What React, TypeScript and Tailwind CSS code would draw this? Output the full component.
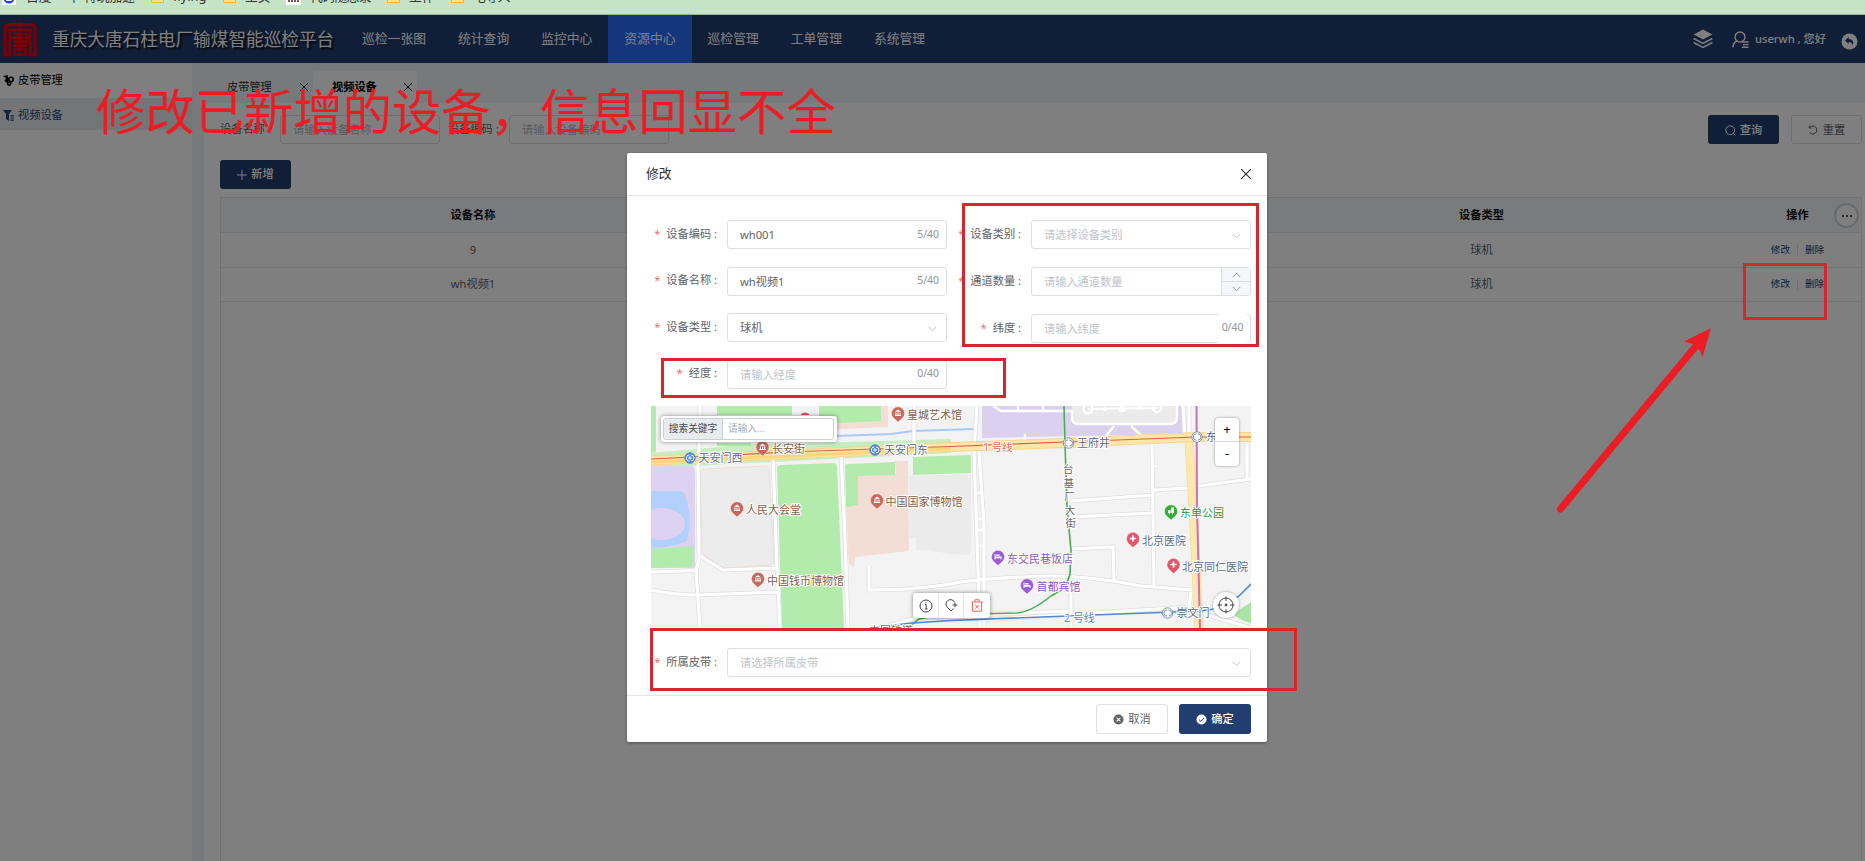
import React from "react";

const NAV = ["巡检一张图", "统计查询", "监控中心", "资源中心", "巡检管理", "工单管理", "系统管理"];

function Folder() {
  return (
    <svg width="13" height="12" viewBox="0 0 13 12">
      <path d="M0.5 1.5 H5 L6.5 3 H12.5 V11.5 H0.5 Z" fill="#fbe08a" stroke="#e8bb3c" />
    </svg>
  );
}

function Bookmarks() {
  return (
    <div className="relative h-[15px] w-full overflow-hidden border-b border-[#8fb596] bg-[#c5e3c7]">
      <div className="absolute left-0 top-[-13px] flex h-[20px] items-center whitespace-nowrap text-[12.8px] text-[#333]">
        <div className="flex w-[151px] items-center gap-[10px] pl-[2px]">
          <svg width="14" height="16" viewBox="0 0 14 16">
            <rect width="14" height="16" fill="#fff" />
            <circle cx="7" cy="9" r="5.5" fill="#2a3fd6" />
            <rect x="4" y="10" width="6" height="2" rx="1" fill="#fff" />
          </svg>
          <span>百度 一下 特玩加速</span>
        </div>
        <div className="flex w-[72px] items-center gap-[9px]"><Folder /><span>flying</span></div>
        <div className="flex w-[63px] items-center gap-[9px]"><Folder /><span>主页</span></div>
        <div className="flex w-[101px] items-center gap-[9px]">
          <svg width="15" height="16" viewBox="0 0 15 16">
            <rect width="15" height="16" fill="#fff" />
            <path d="M3 13V10M6 13V8M9 13V9M12 13V10" stroke="#533" strokeWidth="1.6" />
          </svg>
          <span className="tracking-[-0.6px]">代码随想录</span>
        </div>
        <div className="flex w-[64px] items-center gap-[9px]"><Folder /><span>工作</span></div>
        <div className="flex items-center gap-[9px]"><Folder /><span className="tracking-[-0.6px]">电导入</span></div>
      </div>
    </div>
  );
}

function Header() {
  return (
    <header className="flex h-[48px] items-center bg-[#223d6f] text-white">
      <svg className="ml-[3px]" width="34" height="35" viewBox="0 0 34 35" fill="none" stroke="#f5000a" strokeWidth="3.4">
        <path d="M2 34V7Q2 2.6 6 2.6H28Q32 2.6 32 7V34" />
        <path d="M1 33H6.8V8H27.2V33H33" strokeWidth="2.8" />
        <path d="M17 0V24M10 12H24V19.6H10M6 15.8H28M10 23.6H24" strokeWidth="2.6" />
        <path d="M11.6 27.6H22.4V32.4H11.6Z" strokeWidth="2.8" />
      </svg>
      <h1 className="ml-[15px] w-[294px] whitespace-nowrap text-[17.65px] font-normal [text-shadow:2px_2px_2px_rgba(0,0,0,0.9)]">
        重庆大唐石柱电厂输煤智能巡检平台
      </h1>
      <nav className="flex h-full">
        {NAV.map((item) => (
          <div
            key={item}
            className={
              item === "资源中心"
                ? "flex h-full items-center bg-[#2a6df4] px-4 text-[12.8px]"
                : "flex h-full items-center px-4 text-[12.8px]"
            }
          >
            {item}
          </div>
        ))}
      </nav>
      <div className="ml-auto flex items-center pr-[7px]">
        <svg width="20" height="20" viewBox="0 0 20 20" fill="none" stroke="#fff" strokeWidth="1.5">
          <path d="M10 0.6 19.4 5.6 10 10.6 0.6 5.6Z" fill="#fff" stroke="none" />
          <path d="M0.6 9.5 10 14.4 19.4 9.5M0.6 13.5 10 18.4 19.4 13.5" />
        </svg>
        <svg className="ml-[19px]" width="17" height="17" viewBox="0 0 17 17" fill="none" stroke="#fff" strokeWidth="1.4">
          <circle cx="8" cy="6" r="5" />
          <path d="M5 10Q1.5 11.5 0.8 16.3M10 11h6.5M11 13.6h5.5M10 16.2h6.5" />
        </svg>
        <span className="ml-[6px] w-[81px] whitespace-nowrap text-[11.2px] font-medium">userwh , 您好</span>
        <svg className="ml-[5px] mt-[4px]" width="17" height="17" viewBox="0 0 17 17">
          <circle cx="8.5" cy="8.5" r="8" fill="#fff" />
          <path d="M7.7 4 4 7.5 7.7 11V9Q11 8.8 11.8 12.5 13.8 6.6 7.7 6.1Z" fill="#223d6f" />
        </svg>
      </div>
    </header>
  );
}

function Close({ className }: { className?: string }) {
  return (
    <svg className={className} width="10" height="10" viewBox="0 0 10 10" stroke="currentColor" strokeWidth="1">
      <path d="M1 1 9 9M9 1 1 9" />
    </svg>
  );
}

function Chevron({ up, className }: { up?: boolean; className?: string }) {
  return (
    <svg className={className} width="9" height="6" viewBox="0 0 9 6" fill="none" stroke="currentColor" strokeWidth="1">
      <path d={up ? "M0.8 5 4.5 1.2 8.2 5" : "M0.8 1 4.5 4.8 8.2 1"} />
    </svg>
  );
}

function Actions() {
  return (
    <div className="flex items-center justify-center text-[9.6px] text-[#223d6f]">
      <span>修改</span>
      <span className="mx-[7px] h-[11px] w-px bg-[#dcdfe6]" />
      <span>删除</span>
    </div>
  );
}

const COLS = "grid grid-cols-[504px_504px_505px_minmax(0,1fr)] items-center text-center";

function Page() {
  return (
    <div className="flex h-[798px]">
      <aside className="w-[192px] shrink-0 bg-white text-[11.2px]">
        <div className="flex h-[35px] items-center gap-[4px] pl-[3px] text-black">
          <svg width="11" height="11" viewBox="0 0 11 11" fill="none" stroke="currentColor">
            <path d="M0 1 3 3 1.5 6 4 8 6 5 4.5 0Z" fill="currentColor" stroke="none" />
            <circle cx="8" cy="4.4" r="2.2" strokeWidth="1.6" />
            <circle cx="6.2" cy="8.6" r="1.6" strokeWidth="1.6" />
          </svg>
          <span>皮带管理</span>
        </div>
        <div className="flex h-[32px] items-center gap-[4px] bg-[#e8eaef] pl-[3px] pt-[2px] text-[#29467c]">
          <svg width="11" height="11" viewBox="0 0 11 11" fill="currentColor">
            <path d="M0 0H9L6 4V11L3 9V4Z" />
            <path d="M7.5 5.2H11V6.4H7.5ZM7.5 7.4H11V8.6H7.5ZM7.5 9.6H11V10.8H7.5Z" />
          </svg>
          <span>视频设备</span>
        </div>
      </aside>
      <main className="flex min-w-0 grow flex-col bg-[#f1f3f6]">
        <div className="flex h-[40px] items-end pl-[21px] text-[11.2px]">
          <div className="flex h-[32px] w-[100px] items-center pl-[14px] text-[#333]">
            <span className="w-[72px]">皮带管理</span>
            <Close />
          </div>
          <div className="flex h-[32px] w-[104px] items-center rounded-t-[4px] bg-white pl-[19px] text-black">
            <span className="w-[71px] font-bold">视频设备</span>
            <Close />
          </div>
        </div>
        <section className="ml-[12px] flex grow flex-col bg-white pl-[16px] pr-[3px] pt-[12px] text-[11.2px] text-[#606266]">
          <div className="flex h-[29px] items-center">
            <span className="w-[60px]">设备名称 :</span>
            <div className="flex h-[29px] w-[160px] items-center rounded-[3px] border border-[#dcdfe6] pl-[12px] pt-[1px] text-[#b4b8c0]">请输入设备名称</div>
            <span className="ml-[8px] w-[61px]">设备编码 :</span>
            <div className="flex h-[29px] w-[160px] items-center rounded-[3px] border border-[#dcdfe6] pl-[12px] pt-[1px] text-[#b4b8c0]">请输入设备编码</div>
            <div className="ml-auto flex gap-[12px]">
              <div className="flex h-[29px] w-[71px] items-center justify-center gap-[4px] rounded-[3px] bg-[#223d6f] pt-px font-medium text-white">
                <svg width="11" height="11" viewBox="0 0 11 11" fill="none" stroke="currentColor">
                  <circle cx="5.2" cy="5.2" r="4.4" />
                  <path d="M8.3 8.3 10.3 10.3" />
                </svg>
                查询
              </div>
              <div className="flex h-[29px] w-[71px] items-center justify-center gap-[5px] rounded-[3px] border border-[#dcdfe6] pt-px">
                <svg width="10" height="10" viewBox="0 0 10 10" fill="none" stroke="currentColor">
                  <path d="M2 2.2A4 4 0 1 1 1.6 7.4M1.2 0.6V3H3.6" />
                </svg>
                重置
              </div>
            </div>
          </div>
          <div className="mt-[16px] flex h-[29px] w-[71px] items-center justify-center gap-[4px] rounded-[3px] bg-[#223d6f] font-medium text-white">
            <svg width="10" height="10" viewBox="0 0 10 10" stroke="currentColor"><path d="M5 0V10M0 5H10" /></svg>
            新增
          </div>
          <div className="mt-[8px] grow border-x border-t border-[#e3e6ec]">
            <div className={`${COLS} relative h-[35px] border-b border-[#e3e6ec] bg-[#f4f6fa] font-bold text-[#111]`}>
              <span>设备名称</span>
              <span />
              <span>设备类型</span>
              <span>操作</span>
              <span className="absolute right-[2px] top-[5px] flex h-[25px] w-[25px] items-center justify-center gap-[2px] rounded-full border-2 border-[#d0d3d8] bg-white">
                <i className="h-[2px] w-[2px] bg-[#555]" />
                <i className="h-[2px] w-[2px] bg-[#555]" />
                <i className="h-[2px] w-[2px] bg-[#555]" />
              </span>
            </div>
            <div className={`${COLS} h-[35px] border-b border-[#e3e6ec]`}>
              <span>9</span>
              <span />
              <span>球机</span>
              <Actions />
            </div>
            <div className={`${COLS} h-[34px] border-b border-[#e3e6ec]`}>
              <span>wh视频1</span>
              <span />
              <span>球机</span>
              <Actions />
            </div>
          </div>
        </section>
      </main>
    </div>
  );
}

function Label({ text, className }: { text: string; className: string }) {
  return (
    <div className={`${className} flex shrink-0 justify-end whitespace-nowrap pb-[1px]`}>
      <span className="mr-[6px] text-[#f56c6c]">*</span>
      <span>{text} :</span>
    </div>
  );
}

type FieldProps = { label: string; value?: string; placeholder?: string; count?: string; kind?: "select" | "number"; right?: boolean; patch?: boolean };

function Field({ label, value, placeholder, count, kind, right, patch }: FieldProps) {
  return (
    <div className="flex h-[29px] items-center">
      <Label text={label} className={right ? "w-[75px] pr-[10px]" : "w-[100px] pr-[10px]"} />
      <div className="relative flex h-[29px] w-[220px] shrink-0 items-center rounded-[3px] border border-[#dcdfe6] pl-[12px]">
        <span className={value ? "pt-[2px] text-[#606266]" : "pt-[2px] text-[#c0c4cc]"}>{value ?? placeholder}</span>
        {count && !patch && <span className="ml-auto pr-[7px] text-[10.4px] text-[#909399]">{count}</span>}
        {count && patch && (
          <span className="absolute right-[3px] top-[-1px] flex h-[29px] w-[29px] items-center justify-center bg-white pb-[1px] text-[10.4px] text-[#909399]">
            {count}
          </span>
        )}
        {kind === "select" && <Chevron className="ml-auto mr-[9px] mt-[2px] text-[#c0c4cc]" />}
        {kind === "number" && (
          <div className="ml-auto flex h-full w-[29px] flex-col border-l border-[#dcdfe6] bg-[#f5f7fa] text-[#909399]">
            <div className="flex h-[14px] items-center justify-center border-b border-[#dcdfe6]"><Chevron up /></div>
            <div className="flex grow items-center justify-center"><Chevron /></div>
          </div>
        )}
      </div>
    </div>
  );
}

type Place = { x: number; y: number; px: number; text: string; tone: string; pin: "museum" | "hotel" | "hospital" | "park" };

const PLACES: Place[] = [
  { x: 256, y: 8.5, px: 247, text: "皇城艺术馆", tone: "#84604a", pin: "museum" },
  { x: 121, y: 42.5, px: 111.5, text: "长安街", tone: "#84604a", pin: "museum" },
  { x: 95, y: 103.5, px: 86, text: "人民大会堂", tone: "#84604a", pin: "museum" },
  { x: 234.5, y: 95.5, px: 226, text: "中国国家博物馆", tone: "#84604a", pin: "museum" },
  { x: 116, y: 174, px: 107, text: "中国钱币博物馆", tone: "#84604a", pin: "museum" },
  { x: 356, y: 152, px: 347, text: "东交民巷饭店", tone: "#8f58bd", pin: "hotel" },
  { x: 385.5, y: 180.5, px: 376, text: "首都宾馆", tone: "#8f58bd", pin: "hotel" },
  { x: 491, y: 134, px: 482, text: "北京医院", tone: "#566a8c", pin: "hospital" },
  { x: 531, y: 160, px: 522.5, text: "北京同仁医院", tone: "#566a8c", pin: "hospital" },
  { x: 529, y: 106.5, px: 520, text: "东单公园", tone: "#2f9438", pin: "park" },
];

const PIN_FILL = { museum: "#c4695c", hotel: "#9a5cd0", hospital: "#e0566a", park: "#35ac3a" };

const PIN_GLYPH = {
  museum: "M-3 -1.2 0 -3.6 3 -1.2ZM-2.6 -0.6H-1.5V2H-2.6ZM-0.5 -0.6H0.5V2H-0.5ZM1.5 -0.6H2.6V2H1.5ZM-3.2 2H3.2V3H-3.2Z",
  hotel: "M-3.5 -2.5H-2.5V0H3.5V3H2.6V1.8H-2.5V3H-3.5ZM-1.8 -2H1.5V-0.6H-1.8Z",
  hospital: "M-0.8 -3.2H0.8V-0.8H3.2V0.8H0.8V3.2H-0.8V0.8H-3.2V-0.8H-0.8Z",
  park: "M-3 -1H-0.5V2H-1.3V3.4H-2.1V2H-3ZM0.2 -3.4H3V2H2V3.4H1.1V2H0.2Z",
};

const METRO = [
  { x: 39, y: 52, tx: 47.5, text: "天安门西", solid: true },
  { x: 224, y: 44, tx: 233, text: "天安门东", solid: true },
  { x: 417.5, y: 37, tx: 426, text: "王府井", solid: false },
  { x: 546, y: 31, tx: 555, text: "东", solid: false },
  { x: 516.5, y: 207, tx: 525.5, text: "崇文门", solid: false },
];

const ROADS = [
  "M49 0V20L47 58 48 148 M49 150 72 164 126 162 M0 166 45 164.5 49 150 M45 164 49 222",
  "M0 184Q25 189 48 189L126 186",
  "M122 52 126 162 129 222",
  "M190 48 194 130 197 222",
  "M263 0V42",
  "M218 160V184L255 183Q285 181 310 176Q350 171 400 170Q440 170 490 180L541 184",
  "M326 0 323 45 329 222 M328 45 333 120V222 M324 87H332M326 113H333M327 124H333M327 140H333",
  "M501 38 503 180 M503 60H506 M420 95 501 89 M421 111 501 107 M503 84 536 82 M420 143 462 141 463 174",
  "M532 0 534 32 M538 0V30 M548 80 600 73 M596 36V74 M540 186 538 201 330 214 M420 170V222",
  "M230 222 268 211 420 205 M0 222H130 M550 207 600 222",
];

function CityMap() {
  return (
    <div className="relative ml-[24px] h-[222px] w-[600px] overflow-hidden bg-[#f3f3f3]">
      <svg className="block" width="600" height="222" viewBox="0 0 600 222">
        <g fill="#b3ebad">
          <path d="M0 0H5V46L0 47ZM66 0H141V9H66ZM66 37H100V40H66Z" />
          <path d="M126 62Q126 59 130 59L182 57Q186 57 186 61L193 222H131Z" />
          <path d="M0 47 90 39 300 33V36L0 54ZM0 57 300 44V47L0 62Z" opacity="0.7" />
          <path d="M262 51 320 49V67L262 69Z" />
        </g>
        <path d="M168 0H237V21L168 24Z" fill="#f4ddd5" />
        <path d="M168 0H230V15L168 18Z" fill="#b3ebad" />
        <path d="M0 60H40Q44 60 44 65V162H0Z" fill="#ddd3f0" />
        <path d="M0 85 30 85Q34 86 35 92Q42 114 36 135Q20 142 0 142Z" fill="#b3cffc" />
        <ellipse cx="11" cy="118" rx="23" ry="16" fill="#ddd3f0" />
        <path d="M0 143 43 140V157Q42 160 38 161L0 162Z" fill="#b3ebad" />
        <path d="M49 66Q50 63 54 63L114 60Q118 60 118 64L123 154Q123 158 119 159L72 162 51 147Z" fill="#ececec" stroke="#f0dcd6" />
        <path d="M207 70 245 68 244 55H257L258 145 204 151 203 161 198 158 195 100 207 99Z" fill="#f4ddd5" />
        <path d="M194 60Q194 58 197 58L244 56V69L207 70V99L195 101Z" fill="#b3ebad" />
        <path d="M258 70 320 68V149L299 148 278 144 265 145V132H258Z" fill="#ebebeb" />
        <path d="M331 0H531V28L331 32Z" fill="#dbd1ee" />
        <path d="M421 0H526V13Q526 17 521 17L428 18Q421 18 421 12Z" fill="#ebebeb" />
        <path d="M582 208 600 196V217Q590 215 582 208Z" fill="#a9e4a4" />
        <g fill="none" stroke="#fff" strokeWidth="2.4">
          <path d="M342 0 350 5H421M367 0V5M392 0V5M421 5V12Q421 18 428 18H520Q526 17 526 12V0M455 30 463 20M480 20 492 31M374 28V34" />
          <path d="M437 3 506 2" strokeWidth="2" />
          <circle cx="437" cy="3" r="4.5" /><circle cx="506" cy="2" r="4" />
          <g fill="#fff"><circle cx="454" cy="3" r="1" /><circle cx="471" cy="3" r="2" /><circle cx="489" cy="2" r="1" /></g>
        </g>
        <path d="M185 30 240 28 262 25 322 23" fill="none" stroke="#abc9fb" strokeWidth="2" />
        <g fill="none">
          {ROADS.map((d) => <path key={d} d={d} stroke="#dedede" strokeWidth="4.6" />)}
          {ROADS.map((d) => <path key={d} d={d} stroke="#fff" strokeWidth="3.2" />)}
          <path d="M538 34 543 120 548 222" stroke="#f3dc9e" strokeWidth="9" />
          <path d="M538 34 543 120 548 222" stroke="#fde9ae" strokeWidth="7.5" />
          <path d="M0 54.5 150 48 300 41 414 37 545 31H600" stroke="#f8d68c" strokeWidth="10" />
          <path d="M0 54.5 150 48 300 41 414 37 545 31H600" stroke="#ffe6a8" strokeWidth="8" />
          <path d="M0 56 150 49.5 300 42.5" stroke="#fbd779" strokeWidth="3" />
          <path d="M0 53 150 45.5 300 40.5 414 36 545 31H600" stroke="#d9614b" strokeWidth="1.2" />
          <path d="M545.5 0 546 100 549 222" stroke="#cf6fb4" strokeWidth="2" />
          <path d="M413 0 414 37 416 100 420 145 419 168Q416 182 400 190Q380 206 366 207L290 209 268 213 256 222" stroke="#48af53" strokeWidth="1.6" />
          <path d="M225 221 262 217 300 214.5 442 209 549 205 571 202 588 190 600 178" stroke="#4e8bd0" strokeWidth="1.6" />
        </g>
        <path d="M150 9V8Q154 5 158 8V9Z" fill="#dd5262" />
        <g fontSize="11" stroke="#fff" strokeWidth="2" strokeLinejoin="round" paintOrder="stroke" dominantBaseline="central">
          {PLACES.map((p) => <text key={p.text} x={p.x} y={p.y} fill={p.tone}>{p.text}</text>)}
          {METRO.map((m) => <text key={m.text} x={m.tx} y={m.y - 0.5} fill="#566a8c">{m.text}</text>)}
          {["台", "基", "厂", "大", "街"].map((c, i) => (
            <text key={c} x={412 + i * 0.6} y={63 + i * 13.5} fontSize="10.5" fill="#666">{c}</text>
          ))}
          <text x="332" y="40.5" fontSize="10.4" fill="#e0625f">1 号线</text>
          <text x="413" y="211" fontSize="10.8" fill="#4e8bd0">2 号线</text>
          <text x="218" y="224" fill="#84604a">中国铁道</text>
        </g>
        {PLACES.map((p) => (
          <g key={p.text} transform={`translate(${p.px} ${p.y - 1.5})`}>
            <path d="M0 9 -4.7 4.8A6.5 6.5 0 1 1 4.7 4.8Z" fill={PIN_FILL[p.pin]} stroke="#fff" strokeWidth="0.4" />
            <path d={PIN_GLYPH[p.pin]} fill="#fff" />
          </g>
        ))}
        {METRO.map((m) => (
          <g key={m.text} transform={`translate(${m.x} ${m.y})`} fill="none">
            <circle r="5.2" fill={m.solid ? "#4c86d8" : "#fff"} stroke={m.solid ? "#4c86d8" : "#7f93ae"} />
            <path d="M-0.5 3.2A3 3 0 0 1 -0.5 -3.2M1 -3A3 3 0 0 1 1 3" stroke={m.solid ? "#fff" : "#7f93ae"} strokeWidth="1" />
            {m.solid && <circle r="1.2" stroke="#fff" />}
          </g>
        ))}
      </svg>
      <div className="absolute left-[10px] top-[10px] flex h-[26px] w-[176px] rounded-[3px] bg-white p-[2px] pr-[3px] text-[9.7px] shadow-[0_0_4px_rgba(0,0,0,0.45)]">
        <div className="flex grow overflow-hidden rounded-[3px] border border-[#c9cfd6]">
          <span className="flex w-[59px] items-center justify-center whitespace-nowrap border-r border-[#c9cfd6] bg-[#e9ecef] text-[#444b52]">搜索关键字</span>
          <span className="flex items-center pl-[5px] text-[#a8adb3]">请输入...</span>
        </div>
      </div>
      <div className="absolute left-[564px] top-[12px] flex h-[48px] w-[24px] flex-col rounded-[4px] bg-white text-[13px] text-black shadow-[0_0_3px_rgba(0,0,0,0.4)]">
        <span className="flex h-[24px] items-center justify-center border-b border-[#ddd]">+</span>
        <span className="flex h-[24px] items-center justify-center">-</span>
      </div>
      <div className="absolute left-[262px] top-[187px] flex h-[25px] w-[77px] items-center rounded-[3px] bg-white text-[#444] shadow-[0_0_4px_rgba(0,0,0,0.45)]">
        <span className="flex h-full w-[26px] items-center justify-center border-r border-[#e5e5e5]">
          <svg width="14" height="14" viewBox="0 0 14 14" fill="none" stroke="currentColor">
            <circle cx="7" cy="7" r="6" /><path d="M6 5.6H7.2V10M5.8 10H8.6M7 3.2V4.4" />
          </svg>
        </span>
        <span className="flex h-full w-[25px] items-center justify-center border-r border-[#e5e5e5]">
          <svg width="13" height="13" viewBox="0 0 13 13" fill="none" stroke="currentColor">
            <path d="M9.6 3.4A4.5 4.5 0 1 0 2.6 8.6L6 12 8.4 9.4M7.6 6H12.4M10 3.8V8.2" />
          </svg>
        </span>
        <span className="flex h-full w-[26px] items-center justify-center text-[#f0624f]">
          <svg width="12" height="13" viewBox="0 0 12 13" fill="none" stroke="currentColor">
            <path d="M0.5 3H11.5M4 2.6V0.8H8V2.6M1.4 3V12.2H10.6V3M4.2 5.8 7.8 9.6M7.8 5.8 4.2 9.6" />
          </svg>
        </span>
      </div>
      <div className="absolute left-[562px] top-[186px] flex h-[26px] w-[26px] items-center justify-center rounded-full bg-white shadow-[0_0_3px_rgba(0,0,0,0.35)]">
        <svg width="18" height="18" viewBox="0 0 18 18" fill="none" stroke="#444">
          <circle cx="9" cy="9" r="7" /><path d="M9 0.5V5M9 13V17.5M0.5 9H5M13 9H17.5" /><circle cx="9" cy="9" r="1" fill="#444" />
        </svg>
      </div>
    </div>
  );
}

function Modal() {
  return (
    <div className="ml-[627px] mt-[138px] flex h-[589px] w-[640px] flex-col rounded-[2px] bg-white text-[11.2px] text-[#606266] shadow-[0_1px_3px_rgba(0,0,0,0.4)]">
      <div className="flex h-[43px] shrink-0 items-center justify-between border-b border-[#e4e6ea] pl-[19px] pr-[15px] text-[12.8px] text-[#303133]">
        <span>修改</span>
        <Close className="h-[12px] w-[12px]" />
      </div>
      <div className="flex h-[210px] shrink-0 pt-[24px]">
        <div className="flex w-[329px] flex-col gap-[17.6px]">
          <Field label="设备编码" value="wh001" count="5/40" />
          <Field label="设备名称" value="wh视频1" count="5/40" />
          <Field label="设备类型" value="球机" kind="select" />
          <Field label="经度" placeholder="请输入经度" count="0/40" />
        </div>
        <div className="flex flex-col gap-[18px]">
          <Field right label="设备类别" placeholder="请选择设备类别" kind="select" />
          <Field right label="通道数量" placeholder="请输入通道数量" kind="number" />
          <Field right label="纬度" placeholder="请输入纬度" count="0/40" patch />
        </div>
      </div>
      <CityMap />
      <div className="flex h-[67px] shrink-0 pt-[20px]">
        <div className="flex h-[29px] items-center">
          <Label text="所属皮带" className="w-[100px] pr-[10px]" />
          <div className="flex h-[29px] w-[524px] items-center rounded-[3px] border border-[#dcdfe6] pl-[12px] pr-[9px]">
            <span className="pt-[2px] text-[#c0c4cc]">请选择所属皮带</span>
            <Chevron className="ml-auto mt-[2px] text-[#c0c4cc]" />
          </div>
        </div>
      </div>
      <div className="flex grow justify-end gap-[11px] border-t border-[#e4e6ea] pr-[16px] pt-[8px]">
        <div className="flex h-[30px] w-[72px] items-center justify-center gap-[4px] rounded-[3px] border border-[#dcdfe6]">
          <svg width="11" height="11" viewBox="0 0 11 11"><circle cx="5.5" cy="5.5" r="5" fill="#606266" /><path d="M3.6 3.6 7.4 7.4M7.4 3.6 3.6 7.4" stroke="#fff" strokeWidth="1.1" /></svg>
          取消
        </div>
        <div className="flex h-[30px] w-[72px] items-center justify-center gap-[4px] rounded-[3px] bg-[#223d6f] font-medium text-white">
          <svg width="11" height="11" viewBox="0 0 11 11"><circle cx="5.5" cy="5.5" r="5" fill="#fff" /><path d="M3 5.6 4.9 7.4 8.1 4" fill="none" stroke="#223d6f" strokeWidth="1" /></svg>
          确定
        </div>
      </div>
    </div>
  );
}

function Annotations() {
  return (
    <>
      <div className="absolute left-[962px] top-[203px] h-[144px] w-[297px] border-[3px] border-[#d7262e]" />
      <div className="absolute left-[661px] top-[358px] h-[40px] w-[345px] border-[3px] border-[#d7262e]" />
      <div className="absolute left-[650px] top-[628px] h-[63px] w-[647px] border-[3px] border-[#d7262e]" />
      <div className="absolute left-[1743px] top-[263px] h-[57px] w-[84px] border-[3px] border-[#d7262e]" />
      <p className="absolute left-[96px] top-[75px] whitespace-nowrap text-[49.3px] leading-[72px] text-[#ec1c24]">修改已新增的设备，信息回显不全</p>
      <svg className="absolute left-[1550px] top-[320px]" width="170" height="200" viewBox="0 0 170 200">
        <path d="M10.5 189 146 26" stroke="#ec1c24" strokeWidth="7" strokeLinecap="round" />
        <path d="M161 8 134 21.5 143 24 150 30.5 152.5 37Z" fill="#ec1c24" />
      </svg>
    </>
  );
}

export default function App() {
  return (
    <div className="relative h-[861px] w-[1865px] overflow-hidden bg-white font-['Noto_Sans','Noto_Sans_CJK_SC',sans-serif] text-[11.2px]">
      <Bookmarks />
      <Header />
      <Page />
      <div className="absolute inset-x-0 bottom-0 top-[15px] bg-black/50">
        <Modal />
      </div>
      <Annotations />
    </div>
  );
}
